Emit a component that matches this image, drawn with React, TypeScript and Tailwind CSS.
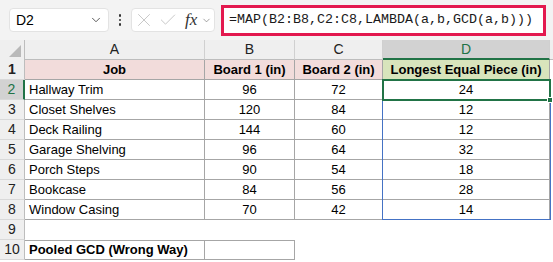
import { ChevronDown, X, Check } from 'lucide-react';

const COLS = [
  { key: 'A', w: 'w-[180px]' },
  { key: 'B', w: 'w-[90px]' },
  { key: 'C', w: 'w-[88px]' },
  { key: 'D', w: 'w-[167px]' },
];

const rows = [
  { job: 'Hallway Trim', b1: 96, b2: 72, d: 24 },
  { job: 'Closet Shelves', b1: 120, b2: 84, d: 12 },
  { job: 'Deck Railing', b1: 144, b2: 60, d: 12 },
  { job: 'Garage Shelving', b1: 96, b2: 64, d: 32 },
  { job: 'Porch Steps', b1: 90, b2: 54, d: 18 },
  { job: 'Bookcase', b1: 84, b2: 56, d: 28 },
  { job: 'Window Casing', b1: 70, b2: 42, d: 14 },
];

function RowHead({ n, active }: { n: number; active?: boolean }) {
  return (
    <div
      className={`flex h-[20px] w-[25px] shrink-0 items-center justify-center border-b border-[#d9d9d9] text-[14px] ${
        active
          ? 'border-r-2 border-r-[#217346] bg-[#d2d2d2] text-[#217346]'
          : 'border-r border-r-[#bdbdbd] bg-[#efefef] text-[#222]'
      }`}
    >
      {n}
    </div>
  );
}

export default function App() {
  return (
    <div
      className="relative h-[262px] w-[553px] overflow-hidden bg-white text-black"
      style={{ fontFamily: '"Liberation Sans", Arial, sans-serif' }}
    >
      {/* formula bar */}
      <div className="flex h-[40px] items-center bg-[#f3f3f3] pl-[9px]">
        <div className="flex h-[24px] w-[100px] items-center justify-between rounded-[4px] border border-[#e3e3e3] bg-white pl-[6px] pr-[5px] text-[14px]">
          <span>D2</span>
          <ChevronDown size={14} strokeWidth={1.5} className="text-[#444]" />
        </div>
        <div className="mx-[7px] flex w-[8px] flex-col items-center gap-[2px]">
          <span className="h-[2.5px] w-[2.5px] rounded-full bg-[#333]" />
          <span className="h-[2.5px] w-[2.5px] rounded-full bg-[#333]" />
          <span className="h-[2.5px] w-[2.5px] rounded-full bg-[#333]" />
        </div>
        <div className="flex h-[24px] w-[84px] items-center rounded-[4px] border border-[#e3e3e3] bg-white pl-[1px]">
          <X size={22} strokeWidth={0.9} className="text-[#bdbdbd]" />
          <Check size={20} strokeWidth={1} className="ml-[3px] text-[#bdbdbd]" />
          <span
            className="ml-[7px] text-[17px] italic text-[#333]"
            style={{ fontFamily: '"Liberation Serif", serif' }}
          >
            fx
          </span>
          <ChevronDown size={11} strokeWidth={1.5} className="ml-[4px] text-[#777]" />
        </div>
        <div className="ml-[6px] flex h-[31px] w-[325px] items-center border-[3px] border-[#e3194f] bg-white pl-[5px]">
          <span
            className="text-[13.33px] text-[#1a1a1a]"
            style={{ fontFamily: '"Liberation Mono", monospace' }}
          >
            =MAP(B2:B8,C2:C8,LAMBDA(a,b,GCD(a,b)))
          </span>
        </div>
      </div>

      {/* column headers */}
      <div className="flex h-[20px] bg-[#efefef] text-[14px]">
        <div className="relative w-[25px] shrink-0 border-r border-[#bdbdbd]">
          <div
            className="absolute bottom-[3px] right-[3px] h-[12px] w-[12px] bg-[#b9b9b9]"
            style={{ clipPath: 'polygon(100% 0, 100% 100%, 0 100%)' }}
          />
        </div>
        {COLS.map((c) => (
          <div
            key={c.key}
            className={`${c.w} flex shrink-0 items-center justify-center border-r border-[#d0d0d0] ${
              c.key === 'D'
                ? 'border-b-2 border-b-[#217346] bg-[#d2d2d2] text-[#217346]'
                : 'border-b border-b-[#bdbdbd] text-[#222]'
            }`}
          >
            {c.key}
          </div>
        ))}
        <div className="flex-1 border-b border-[#bdbdbd]" />
      </div>

      {/* row 1 */}
      <div className="flex text-[13px] font-bold">
        <RowHead n={1} />
        <div className="flex h-[20px] w-[180px] shrink-0 items-center justify-center border-b border-r border-[#a6a6a6] bg-[#f2dcdb]">
          Job
        </div>
        <div className="flex h-[20px] w-[90px] shrink-0 items-center justify-center border-b border-r border-[#a6a6a6] bg-[#f2dcdb]">
          Board 1 (in)
        </div>
        <div className="flex h-[20px] w-[88px] shrink-0 items-center justify-center border-b border-r border-[#a6a6a6] bg-[#f2dcdb]">
          Board 2 (in)
        </div>
        <div className="flex h-[20px] w-[167px] shrink-0 items-center justify-center border-b border-r border-[#a6a6a6] bg-[#d8e4bc]">
          Longest Equal Piece (in)
        </div>
      </div>

      {/* data rows */}
      <div className="relative">
        {rows.map((r, i) => (
          <div key={r.job} className="flex text-[13px]">
            <RowHead n={i + 2} active={i === 0} />
            <div className="flex h-[20px] w-[180px] shrink-0 items-center border-b border-r border-[#a6a6a6] pl-[4px]">
              {r.job}
            </div>
            <div className="flex h-[20px] w-[90px] shrink-0 items-center justify-center border-b border-r border-[#a6a6a6]">
              {r.b1}
            </div>
            <div className="flex h-[20px] w-[88px] shrink-0 items-center justify-center border-b border-r border-[#a6a6a6]">
              {r.b2}
            </div>
            <div className="flex h-[20px] w-[167px] shrink-0 items-center justify-center border-b border-r border-[#a6a6a6]">
              {r.d}
            </div>
          </div>
        ))}
        {/* spill range outline */}
        <div className="pointer-events-none absolute left-[382px] top-[-1px] h-[141px] w-[169px] border border-[#4472c4]" />
        {/* active cell */}
        <div className="pointer-events-none absolute left-[382px] top-[-1px] h-[22px] w-[169px] border-2 border-[#217346]" />
        <div className="absolute left-[547px] top-[17px] h-[6px] w-[6px] border border-white bg-[#217346]" />
      </div>

      {/* row 9 */}
      <div className="flex text-[13px]">
        <RowHead n={9} />
        <div className="h-[20px] flex-1" />
      </div>

      {/* row 10 */}
      <div className="flex text-[13px]">
        <RowHead n={10} />
        <div className="flex h-[20px] w-[180px] shrink-0 items-center border border-l-0 border-[#a6a6a6] pl-[4px] font-bold">
          Pooled GCD (Wrong Way)
        </div>
        <div className="h-[20px] w-[90px] shrink-0 border border-l-0 border-[#a6a6a6]" />
      </div>
    </div>
  );
}
